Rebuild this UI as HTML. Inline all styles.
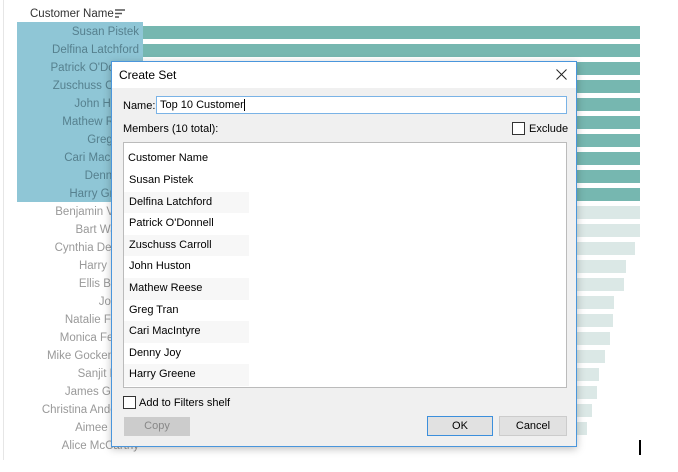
<!DOCTYPE html>
<html><head><style>
body{margin:0;width:678px;height:472px;background:#fff;position:relative;overflow:hidden;font-family:"Liberation Sans",sans-serif}
.a{position:absolute}
.lbl{position:absolute;right:539px;font-size:11.5px;color:#999;white-space:nowrap;line-height:14px}
.bar{position:absolute;left:143px;height:13px}
.dlg{font-size:11px;color:#000}
.row{position:absolute;left:0;width:125px;height:21.6px;line-height:21.6px;padding-left:5px;box-sizing:border-box}
</style></head><body>
<div class="a" style="left:3px;top:0;width:1px;height:460px;background:#e6e6e6"></div>
<div class="a" style="left:30px;top:8px;font-size:11.5px;color:#333">Customer Name</div>
<svg class="a" style="left:115px;top:9px" width="12" height="10"><path d="M0 1h10M0 4.5h7M0 8h4" stroke="#555" stroke-width="1.5"/></svg>
<div class="a" style="left:17px;top:22px;width:126px;height:180px;background:#8fc6d6"></div>
<div id="rows"></div>
<script>
var names=["Susan Pistek","Delfina Latchford","Patrick O'Donnell","Zuschuss Carroll","John Huston","Mathew Reese","Greg Tran","Cari MacIntyre","Denny Joy","Harry Greene","Benjamin Venier","Bart Watters","Cynthia Delaney","Harry Marie","Ellis Ballard","Joy Bell","Natalie Fritzler","Monica Federle","Mike Gockenbach","Sanjit Engle","James Galang","Christina Anderson","Aimee Bixby","Alice McCarthy"];
var ends=[640,640,640,640,640,640,640,640,640,640,640,640,635,626,624,614,613,610,605,599,597,592,587,0];
var h="";for(var i=0;i<24;i++){var y=32+i*18;h+='<div class="lbl" style="top:'+(y-7)+'px;color:'+(i<10?'#56808e':'#999')+'">'+names[i]+'</div>';if(ends[i])h+='<div class="bar" style="top:'+(y-6)+'px;width:'+(ends[i]-143)+'px;background:'+(i<10?'#76b7b0':'#dbe8e6')+'"></div>';}
document.getElementById('rows').innerHTML=h;
</script>
<div class="a" style="left:639px;top:440px;width:2px;height:15px;background:#000"></div>
<div class="a dlg" style="left:111px;top:61px;width:464px;height:384px;border:1px solid #4a96dc;background:#f0f0f0;box-shadow:0 2px 8px rgba(0,0,0,.25)">
 <div class="a" style="left:0;top:0;width:464px;height:26px;background:#fff"></div>
 <div class="a" style="left:7px;top:6px;font-size:12px">Create Set</div>
 <svg class="a" style="left:444px;top:7px" width="11" height="11"><path d="M0.5 0.5L10.5 10.5M10.5 0.5L0.5 10.5" stroke="#222" stroke-width="1"/></svg>
 <div class="a" style="left:11px;top:38px">Name:</div>
 <div class="a" style="left:44px;top:34px;width:406px;height:16px;border:1px solid #7ab3e6;background:#fff;padding-left:3px;line-height:16px">Top 10 Customer<span style="border-left:1px solid #000"></span></div>
 <div class="a" style="left:11px;top:61px">Members (10 total):</div>
 <div class="a" style="left:400px;top:60px;width:11px;height:11px;border:1px solid #333;background:#fff"></div>
 <div class="a" style="left:417px;top:61px">Exclude</div>
 <div class="a" style="left:11px;top:80px;width:442px;height:244px;border:1px solid #bbb;background:#fff">
  <div class="row" style="top:5px;padding-left:4px">Customer Name</div>
  <div class="row" style="top:27px">Susan Pistek</div>
  <div class="row" style="top:48.6px;background:#f7f7f7">Delfina Latchford</div>
  <div class="row" style="top:70.2px">Patrick O'Donnell</div>
  <div class="row" style="top:91.8px;background:#f7f7f7">Zuschuss Carroll</div>
  <div class="row" style="top:113.4px">John Huston</div>
  <div class="row" style="top:135px;background:#f7f7f7">Mathew Reese</div>
  <div class="row" style="top:156.6px">Greg Tran</div>
  <div class="row" style="top:178.2px;background:#f7f7f7">Cari MacIntyre</div>
  <div class="row" style="top:199.8px">Denny Joy</div>
  <div class="row" style="top:221.4px;background:#f7f7f7">Harry Greene</div>
 </div>
 <div class="a" style="left:11px;top:334px;width:11px;height:11px;border:1px solid #333;background:#fff"></div>
 <div class="a" style="left:27px;top:335px">Add to Filters shelf</div>
 <div class="a" style="left:12px;top:355px;width:66px;height:19px;background:#ccc;color:#888;text-align:center;line-height:19px">Copy</div>
 <div class="a" style="left:315px;top:354px;width:64px;height:18px;border:1px solid #3c8fdc;background:#e1e1e1;text-align:center;line-height:18px">OK</div>
 <div class="a" style="left:387px;top:354px;width:66px;height:18px;border:1px solid #ccc;background:#e1e1e1;text-align:center;line-height:18px">Cancel</div>
</div>
</body></html>
